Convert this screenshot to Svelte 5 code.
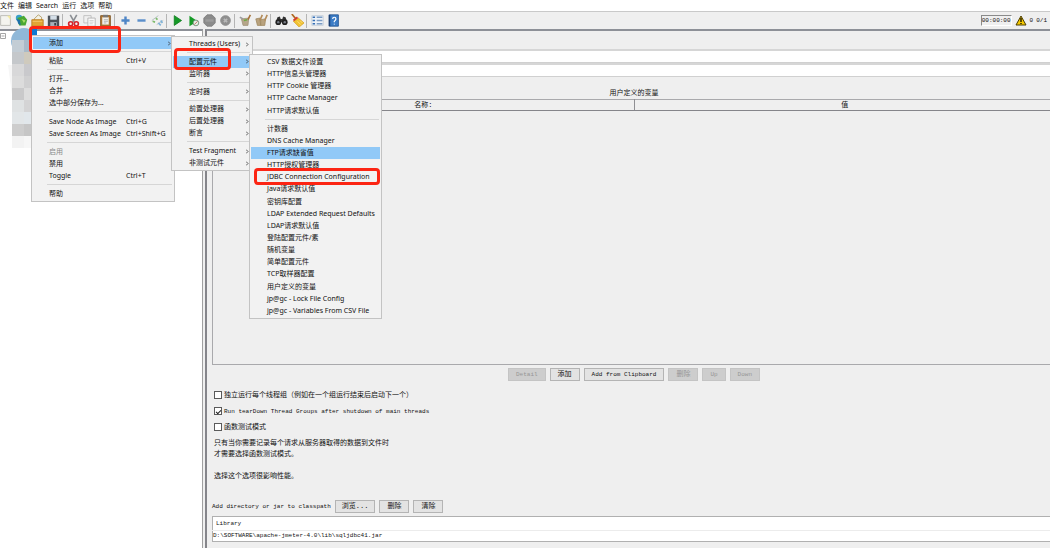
<script>
  const menuBar = ["文件", "编辑", "Search", "运行", "选项", "帮助"];

  const tools = [
    ["new", "templates", "open", "save"],
    ["cut", "copy", "paste"],
    ["expand", "collapse", "toggle"],
    ["start", "startNoTimers", "stop", "shutdown"],
    ["clear", "clearAll"],
    ["search", "resetSearch"],
    ["functions", "help"],
  ];

  // null is a separator
  const editMenu = [
    { label: "添加", sub: true, active: true },
    null,
    { label: "粘贴", keys: "Ctrl+V" },
    null,
    { label: "打开..." },
    { label: "合并" },
    { label: "选中部分保存为..." },
    null,
    { label: "Save Node As Image", keys: "Ctrl+G" },
    { label: "Save Screen As Image", keys: "Ctrl+Shift+G" },
    null,
    { label: "启用", disabled: true },
    { label: "禁用" },
    { label: "Toggle", keys: "Ctrl+T" },
    null,
    { label: "帮助" },
  ];

  const addMenu = [
    { label: "Threads (Users)", sub: true },
    null,
    { label: "配置元件", sub: true, active: true },
    { label: "监听器", sub: true },
    null,
    { label: "定时器", sub: true },
    null,
    { label: "前置处理器", sub: true },
    { label: "后置处理器", sub: true },
    { label: "断言", sub: true },
    null,
    { label: "Test Fragment", sub: true },
    { label: "非测试元件", sub: true },
  ];

  const configMenu = [
    { label: "CSV 数据文件设置" },
    { label: "HTTP信息头管理器" },
    { label: "HTTP Cookie 管理器" },
    { label: "HTTP Cache Manager" },
    { label: "HTTP请求默认值" },
    null,
    { label: "计数器" },
    { label: "DNS Cache Manager" },
    { label: "FTP请求缺省值", active: true },
    { label: "HTTP授权管理器" },
    { label: "JDBC Connection Configuration" },
    { label: "Java请求默认值" },
    { label: "密钥库配置" },
    { label: "LDAP Extended Request Defaults" },
    { label: "LDAP请求默认值" },
    { label: "登陆配置元件/素" },
    { label: "随机变量" },
    { label: "简单配置元件" },
    { label: "TCP取样器配置" },
    { label: "用户定义的变量" },
    { label: "jp@gc - Lock File Config" },
    { label: "jp@gc - Variables From CSV File" },
  ];

  const mosaic = [
    ["#c3cdd5", "#a9bac9"],
    ["#c5c8cb", "#cfcabd"],
    ["#d8d8d9", "#c9c9cc"],
    ["#dcdcdc", "#d0d0d1"],
    ["#c9c9ca", "#dddddd"],
    ["#dfe2e3", "#d4d4d5"],
    ["#e2e6e8", "#e1e7eb"],
    ["#cdcdcd", "#c6c6c6"],
    ["#f3f3f3", "#f7f7f7"],
  ];

  let variableButtons = [
    { label: "Detail", latin: true, disabled: true },
    { label: "添加" },
    { label: "Add from Clipboard", latin: true },
    { label: "删除", disabled: true },
    { label: "Up", latin: true, disabled: true },
    { label: "Down", latin: true, disabled: true },
  ];

  let serialize = $state(false);
  let tearDown = $state(true);
  let functional = $state(false);
</script>

{#snippet icon(name)}
  <svg viewBox="0 0 16 16" aria-hidden="true">
    {#if name === "new"}
      <path d="M2 2h12v12H2z" fill="#f4f4ef" stroke="#b4b4ac" />
      <path d="M10 2h4v5z" fill="#f3e9a0" />
    {:else if name === "templates"}
      <circle cx="5" cy="5" r="4" fill="#3aa0c8" />
      <path d="M3 5l8-3 4 5-2 7H5z" fill="#4aa832" />
      <path d="M2 6l4 1 1 7-3-2z" fill="#1c6fa8" />
      <path d="M8 6l5 2-2 3z" fill="#a6dd63" />
    {:else if name === "open"}
      <path d="M4 6l5-5 4 3v4H4z" fill="#f3f1e4" stroke="#a9925a" />
      <path d="M1 7h14v8H1z" fill="#e2a534" stroke="#b87a1c" />
      <path d="M2 9h12" stroke="#f6cf75" />
    {:else if name === "save"}
      <path d="M1 2h14v13H1z" fill="#4c5158" />
      <path d="M4 2h8v5H4z" fill="#d5dfe8" />
      <path d="M4 10h8v5H4z" fill="#a8b0b8" />
      <path d="M9 11h2v3H9z" fill="#33373c" />
    {:else if name === "cut"}
      <path d="M4 1l5 9M12 1L7 10" stroke="#8b8f94" stroke-width="2" />
      <circle cx="4.500" cy="12" r="2.500" fill="none" stroke="#d5232a" stroke-width="2" />
      <circle cx="11.500" cy="12" r="2.500" fill="none" stroke="#d5232a" stroke-width="2" />
    {:else if name === "copy"}
      <path d="M1 2h9v9H1z" fill="#f0f0f0" stroke="#b9b9b9" />
      <path d="M6 5h9v10H6z" fill="#f8f8f8" stroke="#adadad" />
      <path d="M8 8h5M8 10h5M8 12h4" stroke="#cacaca" />
    {:else if name === "paste"}
      <path d="M2 2h12v13H2z" fill="#b07a38" stroke="#79501f" />
      <path d="M4 4h8v9H4z" fill="#f1f1ec" />
      <path d="M5 1h6v3H5z" fill="#777" />
      <path d="M6 7h5M6 9h5M6 11h3" stroke="#aaa" />
    {:else if name === "expand"}
      <path d="M8 3v10M3 8h10" stroke="#4f86c6" stroke-width="3" />
    {:else if name === "collapse"}
      <path d="M3 8h10" stroke="#5b8fcb" stroke-width="3" />
    {:else if name === "toggle"}
      <path d="M1 8l8-6M7 13l8-5" stroke="#a8b6b8" />
      <path d="M2 9l3 1M6 5l2 2" stroke="#7dbb6a" stroke-width="2" />
      <path d="M9 11l3 3M12 8l2 3" stroke="#7fb2d8" stroke-width="2" />
    {:else if name === "start"}
      <path d="M4 2l9 6-9 6z" fill="#169a27" stroke="#0f7d1d" />
    {:else if name === "startNoTimers"}
      <path d="M3 2l10 7-10 6z" fill="#169a27" />
      <circle cx="11" cy="11" r="3.500" fill="#e4efe4" stroke="#63876b" />
      <path d="M9 13l4-4" stroke="#c05050" />
    {:else if name === "stop"}
      <path d="M5 1h6l4 4v6l-4 4H5l-4-4V5z" fill="#8b8b8b" stroke="#7c7c7c" />
      <path d="M3 8h10" stroke="#9c9c9c" stroke-width="3" />
    {:else if name === "shutdown"}
      <circle cx="8" cy="8" r="6" fill="#8f8f8f" stroke="#8a8a8a" />
      <path d="M6 6l4 4M10 6l-4 4" stroke="#b9b9b9" stroke-width="2" />
    {:else if name === "clear"}
      <path d="M3 6l9-1-1 9H5z" fill="#b6a68a" stroke="#a3957c" />
      <path d="M14 1l-3 6" stroke="#a5723a" stroke-width="2" />
      <path d="M1 4l4 2" stroke="#9a9a9a" stroke-width="2" />
      <path d="M6 8l4-1" stroke="#6faa45" stroke-width="2" />
    {:else if name === "clearAll"}
      <path d="M1 6l5-1 1 9H3zM7 7l6-1-1 8H7z" fill="#b9a27e" stroke="#a08a62" />
      <path d="M9 1L6 8M15 1l-3 7" stroke="#b38b58" stroke-width="2" />
    {:else if name === "search"}
      <path d="M3 4l3-1 1 3h2l1-3 3 1 2 6H1z" fill="#333" />
      <circle cx="4" cy="10" r="3.500" fill="#222" />
      <circle cx="12" cy="10" r="3.500" fill="#222" />
      <circle cx="4" cy="10" r="1.500" fill="#767b84" />
      <circle cx="12" cy="10" r="1.500" fill="#767b84" />
    {:else if name === "resetSearch"}
      <path d="M1 0l5 6" stroke="#b06a22" stroke-width="2" />
      <path d="M3 9l6-4 7 6-6 5z" fill="#f1c232" stroke="#d8a528" />
      <path d="M3 8l5-4" stroke="#d3382c" stroke-width="2" />
      <path d="M8 9l4 4M11 8l3 3" stroke="#fbe58c" />
    {:else if name === "functions"}
      <path d="M1 2h14v12H1z" fill="#eef3f9" stroke="#c3ccd6" />
      <path d="M2 4h3M2 8h3M2 12h3" stroke="#356fb5" stroke-width="2" />
      <path d="M7 4h7M7 8h7M7 12h7" stroke="#7b9cc4" stroke-width="2" />
    {:else if name === "help"}
      <path d="M3 1h11v14H3z" fill="#3b7cc6" stroke="#1d4f8f" />
      <path d="M3 1v14" stroke="#1b3f73" stroke-width="2" />
      <path d="M7 6q0-2 2-2t2 2q0 1-2 3v1M9 12v1" fill="none" stroke="#fff" stroke-width="1.500" />
    {/if}
  </svg>
{/snippet}

{#snippet menu(items, kind)}
  <ul class="menu {kind}">
    {#each items as item}
      {#if item}
        <li class="item">
          <button class:active={item.active} disabled={item.disabled}>
            <span class="label">{item.label}</span>
            {#if item.keys}<span class="keys">{item.keys}</span>{/if}
            {#if item.sub}
              <svg class="arrow" viewBox="0 0 3 5" aria-hidden="true">
                <path d="M0 .5l2 2-2 2" fill="none" stroke="#333" stroke-width=".8" />
              </svg>
            {/if}
          </button>
        </li>
      {:else}
        <li class="rule"></li>
      {/if}
    {/each}
  </ul>
{/snippet}

<div class="app">
  <nav class="menu-bar">
    {#each menuBar as entry}
      <button>{entry}</button>
    {/each}
  </nav>

  <div class="toolbar">
    {#each tools as group}
      <div class="tool-group">
        {#each group as tool}
          <button aria-label={tool}>{@render icon(tool)}</button>
        {/each}
      </div>
    {/each}
    <div class="status">
      <output class="timer">00:00:00</output>
      <svg class="warning" viewBox="0 0 12 11" aria-hidden="true">
        <path d="M6 1l5 9H1z" fill="#f5c800" stroke="#4a3c00" />
        <path d="M6 3v4M6 8v1" stroke="#2b2300" stroke-width="1.500" />
      </svg>
      <span>0</span>
      <span>0/1</span>
    </div>
  </div>

  <div class="workspace">
    <aside class="tree">
      <svg class="expander" viewBox="0 0 6 6" aria-hidden="true">
        <path d="M.5.5h5v5h-5zM1.500 3h3" fill="#fff" stroke="#a5a5a5" />
      </svg>
      <svg class="nodes" viewBox="0 0 32 126" aria-hidden="true">
        <circle cx="16" cy="14" r="13" fill="#90b8d8" />
        <path d="M0 38h8v60q-4-30-8-60z" fill="#f6f6f6" />
        {#each mosaic as row, y}
          {#each row as color, x}
            <rect x={4 + x * 12} y={13 + y * 12} width="12" height="12" fill={color} />
          {/each}
        {/each}
        <path d="M24 2h5v6h-5z" fill="#0f79d4" />
      </svg>
    </aside>

    <main class="plan">
      <div class="heading"></div>
      <input class="field name" aria-label="名称" />
      <input class="field comments" aria-label="注释" />

      <section class="variables">
        <h2>用户定义的变量</h2>
        <table>
          <thead>
            <tr><th>名称:</th><th>值</th></tr>
          </thead>
          <tbody>
            <tr><td colspan="2"></td></tr>
          </tbody>
        </table>
        <div class="actions">
          {#each variableButtons as button}
            <button class="push" class:latin={button.latin} disabled={button.disabled}>
              {button.label}
            </button>
          {/each}
        </div>
      </section>

      <section class="options">
        <label>
          <input type="checkbox" bind:checked={serialize} />
          独立运行每个线程组（例如在一个组运行结束后启动下一个）
        </label>
        <label class="latin">
          <input type="checkbox" bind:checked={tearDown} />
          Run tearDown Thread Groups after shutdown of main threads
        </label>
        <label>
          <input type="checkbox" bind:checked={functional} />
          函数测试模式
        </label>
        <p>只有当你需要记录每个请求从服务器取得的数据到文件时<br />才需要选择函数测试模式。</p>
        <p>选择这个选项很影响性能。</p>
      </section>

      <section class="classpath">
        <div class="classpath-row">
          <span class="latin">Add directory or jar to classpath</span>
          <button class="push wide">浏览...</button>
          <button class="push">删除</button>
          <button class="push">清除</button>
        </div>
        <table class="library latin">
          <thead>
            <tr><th>Library</th></tr>
          </thead>
          <tbody>
            <tr><td>D:\SOFTWARE\apache-jmeter-4.0\lib\sqljdbc41.jar</td></tr>
          </tbody>
        </table>
      </section>
    </main>
  </div>

  {@render menu(editMenu, "edit")}
  {@render menu(addMenu, "add")}
  {@render menu(configMenu, "config")}

  <div class="mark mark-add"></div>
  <div class="mark mark-config"></div>
  <div class="mark mark-jdbc"></div>
</div>

<style>
  :global(body) {
    margin: 0;
    overflow: hidden;
  }

  .app {
    --ui: "Noto Sans", "Noto Sans CJK SC", sans-serif;
    --mono: "Liberation Mono", "Noto Sans CJK SC", monospace;
    position: relative;
    display: flex;
    flex-direction: column;
    height: 100vh;
    overflow: hidden;
    background: #efefef;
    color: #111;
    font: 7px/12px var(--ui);
  }

  button,
  input {
    margin: 0;
    padding: 0;
    border: 0;
    background: none;
    color: inherit;
    font: inherit;
  }

  ul {
    margin: 0;
    padding: 0;
    list-style: none;
  }

  .menu-bar {
    display: flex;
    gap: 4px;
    height: 11px;
    flex: none;
    background: #fff;
  }

  .toolbar {
    display: flex;
    align-items: center;
    flex: none;
    height: 18px;
    box-sizing: border-box;
    border-top: 1px solid #c9c9c9;
  }

  .tool-group {
    display: flex;
    align-items: center;
  }

  .tool-group:first-child {
    margin-left: -3px;
  }

  .tool-group:not(:first-child)::before {
    content: "";
    width: 1px;
    height: 14px;
    margin: 0 2px 0 1px;
    background: #b5b5b5;
  }

  .tool-group button {
    display: grid;
    place-items: center;
    width: 16px;
    height: 16px;
  }

  .tool-group svg {
    width: 13px;
    height: 13px;
  }

  .status {
    display: flex;
    align-items: center;
    gap: 3px;
    margin-left: auto;
    padding-right: 3px;
    font: 6px/10px var(--mono);
  }

  .timer {
    border: 1px solid #fff;
    border-top-color: #8a8a8a;
    border-left-color: #8a8a8a;
    line-height: 9px;
  }

  .warning {
    width: 12px;
    height: 11px;
  }

  .workspace {
    display: flex;
    flex: 1;
    min-height: 0;
  }

  .tree {
    flex: none;
    width: 203px;
    border-top: 2px solid #8d9097;
    border-right: 1px solid #a0a0a0;
    background: #fff;
    position: relative;
    box-sizing: border-box;
  }

  .expander {
    display: block;
    width: 6px;
    height: 6px;
    margin-top: 2px;
  }

  .nodes {
    position: absolute;
    left: 8px;
    top: -4px;
    width: 32px;
    height: 126px;
  }

  .plan {
    display: flex;
    flex-direction: column;
    flex: 1;
    min-width: 0;
    margin-left: 2px;
    padding-left: 5px;
    border-top: 2px solid #8d9097;
    border-left: 2px solid #85858a;
    font: 7px/11px var(--mono);
  }

  .heading {
    height: 18px;
    flex: none;
  }

  .field {
    flex: none;
    box-sizing: border-box;
    height: 14px;
    border-top: 2px solid #d6d6d6;
    border-bottom: 1px solid #d0d0d0;
    background: #fff;
  }

  .variables {
    display: flex;
    flex-direction: column;
    margin-right: -6px;
  }

  h2 {
    margin: 10px 0 0;
    font: inherit;
    line-height: 12px;
    text-align: center;
  }

  table {
    width: 100%;
    border-collapse: collapse;
    table-layout: fixed;
  }

  th,
  td {
    padding: 0;
    font-weight: normal;
  }

  .variables table {
    border: 1px solid #a9a9ac;
  }

  .variables th {
    height: 10px;
    line-height: 10px;
    border-bottom: 1px solid #85858a;
  }

  .variables th + th {
    border-left: 1px solid #8f8f93;
  }

  .variables td {
    height: 253px;
  }

  .actions {
    display: flex;
    justify-content: center;
    gap: 4px;
    margin-top: 3px;
  }

  .push {
    height: 13px;
    padding: 0 7px;
    border: 1px solid #b4b4b4;
    background: #e3e3e3;
    font: 7px/11px var(--mono);
  }

  .push:disabled {
    border-color: #c4c4c4;
    background: #cdcdcd;
    color: #969696;
  }

  .push.wide {
    padding: 0 6px;
  }

  .latin {
    font-size: 6px;
  }

  .options {
    margin-top: 6px;
    padding-left: 2px;
  }

  .options label {
    display: flex;
    align-items: center;
    gap: 2px;
    height: 16px;
  }

  [type="checkbox"] {
    appearance: none;
    box-sizing: border-box;
    width: 8px;
    height: 8px;
    border: 1px solid #5a5a5a;
    background: #fff;
    display: grid;
    place-items: center;
  }

  [type="checkbox"]:checked::after {
    content: "";
    width: 4px;
    height: 2px;
    border: solid #222;
    border-width: 0 0 1px 1px;
    transform: rotate(-45deg);
  }

  p {
    margin: 3px 0 11px;
  }

  .classpath {
    margin-top: 7px;
  }

  .classpath-row {
    display: flex;
    align-items: center;
    gap: 4px;
  }

  .library {
    margin-top: 3px;
    border: 1px solid #b0b0b0;
    border-right: 0;
    background: #fff;
    text-align: left;
  }

  .library th {
    height: 13px;
    padding-left: 3px;
    border-bottom: 1px solid #ececec;
  }

  .library td {
    height: 10px;
    line-height: 10px;
  }

  .menu {
    position: absolute;
    display: flex;
    flex-direction: column;
    box-sizing: border-box;
    padding: 1px;
    border: 1px solid #c3c3c3;
    background: #f2f2f2;
  }

  .edit {
    left: 31px;
    top: 35px;
    width: 144px;
    height: 167px;
  }

  .add {
    left: 171px;
    top: 36px;
    width: 82px;
    height: 135px;
  }

  .config {
    left: 249px;
    top: 54px;
    width: 133px;
    height: 265px;
  }

  .item {
    display: flex;
    flex: 1;
  }

  .item button {
    display: flex;
    align-items: center;
    flex: 1;
    padding: 0 2px 0 16px;
    text-align: left;
    white-space: nowrap;
  }

  .item button.active {
    background: #91c9f7;
  }

  .item button:disabled {
    color: #8a8a8a;
  }

  .label {
    flex: 1;
  }

  .keys {
    width: 45px;
  }

  .arrow {
    width: 3px;
    height: 5px;
  }

  .rule {
    height: 1px;
    margin: 2px 1px 3px 14px;
    background: #d6d6d6;
  }

  .mark {
    position: absolute;
    box-sizing: border-box;
    border: 3px solid #fc2514;
    border-radius: 4px;
  }

  .mark-add {
    left: 29px;
    top: 26px;
    width: 92px;
    height: 27px;
  }

  .mark-config {
    left: 174px;
    top: 48px;
    width: 57px;
    height: 22px;
  }

  .mark-jdbc {
    left: 254px;
    top: 168px;
    width: 126px;
    height: 17px;
  }
</style>
